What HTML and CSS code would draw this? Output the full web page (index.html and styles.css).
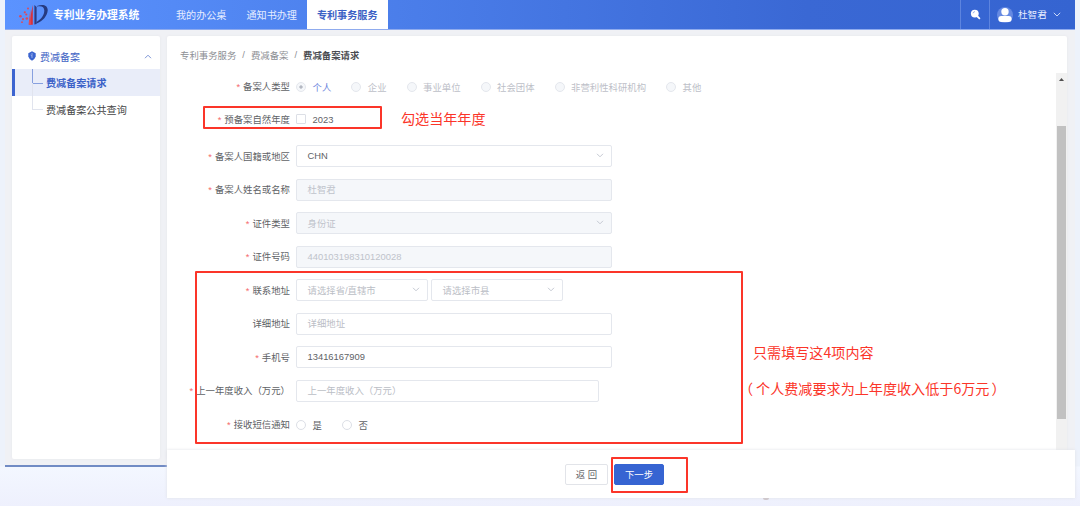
FILE: index.html
```html
<!DOCTYPE html>
<html lang="zh-CN">
<head>
  <meta charset="UTF-8">
  <meta name="viewport" content="width=device-width, initial-scale=1.0">
  <title>专利业务办理系统</title>
  <link rel="stylesheet" href="styles.css">
</head>
<body>
  <div class="app">
    <header class="header">
      <svg class="logo" width="30" height="22" viewBox="0 0 30 22">
        <path d="M18 2C24 -.6 29 1.500 28.700 6.500C28.200 12 24 17 17.500 19.500V18C22.500 15 25.300 11 25.300 6.500C25.300 2.500 22 1.500 18 2.600Z" fill="#263a80"/>
        <path d="M15.400 1L17.600 3V20L15.400 20.500Z" fill="#2b3c84"/>
        <path d="M13.800 1V20.800H10.300L12.300 8Z" fill="#d8323c"/>
        <path d="M11.300 5.500L11.500 14L12 20.800H9.500Z" fill="#e04a56"/>
        <g fill="#dc4a5c">
          <circle cx="9" cy="4.500" r="1"/><circle cx="5.800" cy="8.300" r="1.100"/>
          <circle cx="1.400" cy="12.200" r="1.300"/><circle cx="7.300" cy="10.500" r="1.100"/><circle cx="4" cy="15.200" r="1.100"/><circle cx="7.800" cy="14.500" r="1.300"/><circle cx="3" cy="18.200" r=".9"/>
        </g>
      </svg>
      <span class="title">专利业务办理系统</span>
      <nav class="nav">
        <a>我的办公桌</a>
        <a>通知书办理</a>
        <a class="active">专利事务服务</a>
      </nav>
      <div class="search">
        <svg width="11" height="11" viewBox="0 0 11 11"><circle cx="4.800" cy="4.600" r="3.900" fill="#fff"/><path d="M7.500 7.500L9.400 9.400" stroke="#fff" stroke-width="1.800" stroke-linecap="round"/><path d="M3 4.300A2 2 0 0 1 5 2.600" fill="none" stroke="#8aa4e2" stroke-width=".8"/></svg>
      </div>
      <div class="user">
        <svg width="16" height="16" viewBox="0 0 16 16"><circle cx="8" cy="8" r="8" fill="#668ae2"/><circle cx="8" cy="4.700" r="3.700" fill="#fff"/><rect x="1.300" y="9" width="13.400" height="6" rx="3" fill="#fff"/></svg>
        <span>杜智君</span>
        <svg width="8" height="5" viewBox="0 0 8 5"><path d="M.8 .8L4 4L7.200 .8" fill="none" stroke="#c9d7f6"/></svg>
      </div>
    </header>

    <div class="body">
      <aside class="sidebar">
        <div class="menu-title">
          <svg width="8" height="10" viewBox="0 0 8 10"><path d="M4 .3L7.700 2.200V5.500Q7 8 4 9.700Q1 8 .3 5.500V2.200Z" fill="#3b64cf"/><path d="M4 2V7M2.600 4L4 5.200" stroke="#a9bdf0" stroke-width=".8" fill="none"/></svg>
          <span>费减备案</span>
          <svg class="fold" width="8" height="5" viewBox="0 0 8 5"><path d="M1 4.200L4 1.200L7 4.200" fill="none" stroke="#7d95d6"/></svg>
        </div>
        <div class="menu-item current"><i class="branch"></i>费减备案请求</div>
        <div class="menu-item"><i class="branch"></i>费减备案公共查询</div>
      </aside>

      <main class="main">
        <div class="crumb"><span>专利事务服务</span><i>/</i><span>费减备案</span><i>/</i><b>费减备案请求</b></div>
        <div class="scroll">
          <form class="form">
            <div class="row type-row">
              <label class="required">备案人类型</label>
              <div class="types">
                <span class="radio off checked">个人</span>
                <span class="radio off">企业</span>
                <span class="radio off">事业单位</span>
                <span class="radio off">社会团体</span>
                <span class="radio off">非营利性科研机构</span>
                <span class="radio off">其他</span>
              </div>
            </div>
            <div class="row year-row">
              <label class="required">预备案自然年度</label>
              <span class="checkbox">2023</span>
            </div>
            <div class="row">
              <label class="required">备案人国籍或地区</label>
              <div class="field select">CHN<svg class="arrow" width="8" height="5" viewBox="0 0 8 5"><path d="M1 .8L4 3.800L7 .8"/></svg></div>
            </div>
            <div class="row">
              <label class="required">备案人姓名或名称</label>
              <div class="field disabled">杜智君</div>
            </div>
            <div class="row">
              <label class="required">证件类型</label>
              <div class="field select disabled">身份证<svg class="arrow" width="8" height="5" viewBox="0 0 8 5"><path d="M1 .8L4 3.800L7 .8"/></svg></div>
            </div>
            <div class="row">
              <label class="required">证件号码</label>
              <div class="field disabled">440103198310120028</div>
            </div>
            <div class="row">
              <label class="required">联系地址</label>
              <div class="field select half empty">请选择省/直辖市<svg class="arrow" width="8" height="5" viewBox="0 0 8 5"><path d="M1 .8L4 3.800L7 .8"/></svg></div>
              <div class="field select half empty">请选择市县<svg class="arrow" width="8" height="5" viewBox="0 0 8 5"><path d="M1 .8L4 3.800L7 .8"/></svg></div>
            </div>
            <div class="row">
              <label>详细地址</label>
              <div class="field empty">详细地址</div>
            </div>
            <div class="row">
              <label class="required">手机号</label>
              <div class="field">13416167909</div>
            </div>
            <div class="row">
              <label class="required">上一年度收入（万元）</label>
              <div class="field income empty">上一年度收入（万元）</div>
            </div>
            <div class="row">
              <label class="required">接收短信通知</label>
              <div class="sms">
                <span class="radio">是</span>
                <span class="radio">否</span>
              </div>
            </div>
          </form>
          <div class="scrollbar">
            <svg width="5" height="3" viewBox="0 0 5 3"><path d="M2.500 0L5 3H0Z" fill="#505050"/></svg>
            <div class="thumb"></div>
          </div>
        </div>
      </main>
    </div>
  </div>

  <footer class="actions">
    <button class="btn">返 回</button>
    <button class="btn primary">下一步</button>
  </footer>
  <div class="speck"></div>

  <!-- 操作说明标注 -->
  <div class="mark mark-year"></div>
  <div class="mark mark-fields"></div>
  <div class="mark mark-next"></div>
  <p class="note note-year">勾选当年年度</p>
  <p class="note note-fields">只需填写这4项内容</p>
  <p class="note note-income"><span class="open">（</span>个人费减要求为上年度收入低于6万元<span class="close">）</span></p>
</body>
</html>
```
FILE: styles.css
```css
*,
*::before {
  box-sizing: border-box;
}
body {
  margin: 0;
  height: 506px;
  overflow: hidden;
  position: relative;
  font-family: "Liberation Sans", "Noto Sans CJK SC", sans-serif;
  font-size: 9.4px;
  color: #606266;
  background: linear-gradient(#edf2fb 0, #edf2fb 466px, #f3f7ff 467px, #eef0fd 506px);
}
.app {
  margin: 0 5px;
  height: 467px;
  display: flex;
  flex-direction: column;
  background: #f0f1f5;
  border-bottom: 2px solid #718bc4;
}

/* header */
.header {
  height: 30px;
  flex: none;
  display: flex;
  align-items: center;
  color: #e6edff;
  background: linear-gradient(90deg, #5b93ff, #3a68d4 75%, #3564d1);
  border-bottom: 1px solid #8fabee;
}
.logo {
  margin: 1px 0 0 14px;
}
.title {
  width: 87px;
  margin: 0 0 2px 4px;
  font-size: 10.8px;
  font-weight: bold;
  color: #fff;
  white-space: nowrap;
}
.nav {
  display: flex;
  align-self: stretch;
  margin-left: 26px;
}
.nav a {
  display: flex;
  align-items: center;
  padding: 0 10px;
  font-size: 10.1px;
}
.nav .active {
  background: #fff;
  color: #3b61c5;
  font-weight: bold;
}
.search {
  width: 30px;
  height: 29px;
  margin-left: auto;
  display: flex;
  align-items: center;
  justify-content: center;
  border: solid #5d84df;
  border-width: 0 1px;
}
.user {
  width: 85px;
  display: flex;
  align-items: center;
  padding-left: 7px;
  font-size: 9.6px;
}
.user span {
  margin: 0 6px 1px 5px;
}

/* columns */
.body {
  flex: 1;
  display: flex;
  align-items: flex-start;
  padding: 6px 8px 0 7px;
}
.sidebar {
  width: 148px;
  height: 423px;
  margin-right: 7px;
  background: #fff;
  border-radius: 2px;
  box-shadow: 0 0 3px #e6e7eb;
}
.menu-title {
  height: 33px;
  padding: 7px 8px 0 16px;
  display: flex;
  align-items: center;
  font-size: 10px;
  color: #3e62c4;
}
.menu-title span {
  margin-left: 4px;
}
.fold {
  margin-left: auto;
}
.menu-item {
  height: 27px;
  display: flex;
  align-items: center;
  padding-left: 20px;
  font-size: 10.1px;
  color: #454545;
}
.menu-item.current {
  padding-left: 17px;
  border-left: 3px solid #3c64d0;
  background: #e9edf9;
  color: #3b61c8;
  font-weight: bold;
}
.branch {
  width: 11px;
  height: 27px;
  margin: -27px 3px 0 0;
  border: solid #e1e4ee;
  border-width: 0 0 1px 1px;
}
.current .branch {
  height: 15px;
  margin-top: -12px;
  border-color: #87a0df;
}
.main {
  flex: 1;
  height: 423px;
  background: #fff;
  border-radius: 2px;
  box-shadow: 0 0 3px #e6e7eb;
}
.crumb {
  height: 37px;
  display: flex;
  align-items: center;
  padding-left: 13px;
  color: #8c8e93;
}
.crumb i {
  margin: 0 6px;
  font-style: normal;
}
.crumb b {
  color: #494b50;
}
.scroll {
  height: 377px;
  display: flex;
}

/* form */
.form {
  flex: 1;
  padding-top: 3px;
}
.row {
  height: 22px;
  margin-bottom: 11.5px;
  display: flex;
  align-items: center;
}
.type-row {
  margin-bottom: 10px;
}
.year-row {
  margin-bottom: 15px;
}
.row label {
  width: 123px;
  margin-right: 6px;
  padding-bottom: 1px;
  text-align: right;
  white-space: nowrap;
}
.type-row label {
  padding-bottom: 2px;
}
.required::before {
  content: "*";
  margin-right: 3px;
  color: #f56c6c;
}
.types,
.sms {
  display: flex;
  gap: 20px;
}
.radio,
.checkbox {
  display: flex;
  align-items: center;
}
.sms .radio {
  padding-top: 1px;
}
.radio::before,
.checkbox::before {
  content: "";
  width: 10px;
  height: 10px;
  margin-right: 6.5px;
  border: 1px solid #dcdfe6;
  border-radius: 50%;
  background: #fff;
}
.checkbox::before {
  border-radius: 1px;
}
.radio.off {
  color: #bdc0c8;
}
.radio.off::before {
  border-color: #e4e7ed;
  background: #f5f7fa;
}
.radio.off.checked {
  color: #6a82dc;
}
.radio.checked::before {
  background: radial-gradient(circle, #b4b8c2 1.3px, #f5f7fa 2px);
}
.field {
  width: 316px;
  height: 22px;
  display: flex;
  align-items: center;
  padding: 0 7px 1px 10.5px;
  border: 1px solid #e4e7ed;
  border-radius: 2px;
  background: #fff;
}
.field.half {
  width: 131.5px;
  margin-right: 3.5px;
}
.field.income {
  width: 303px;
}
.field.disabled {
  background: #f5f7fa;
  color: #bfc3cb;
}
.field.empty {
  color: #bbbec6;
}
.arrow {
  margin-left: auto;
  fill: none;
  stroke: #c5c9d2;
}
.scrollbar {
  width: 11px;
  display: flex;
  flex-direction: column;
  align-items: center;
  padding-top: 5px;
  background: #f1f1f1;
}
.thumb {
  width: 9px;
  height: 293px;
  margin-top: 45px;
  background: #c1c1c1;
}

/* the action bar stays above the page bottom */
.actions {
  position: absolute;
  left: 167px;
  right: 5px;
  bottom: 8px;
  height: 48px;
  display: flex;
  padding: 14px 0 0 398px;
  gap: 6px;
  background: #fff;
  box-shadow: 0 0 3px #dfe1e6;
}
.btn {
  width: 43px;
  height: 21px;
  padding: 0 0 1px;
  border: 1px solid #e2e4e9;
  border-radius: 2px;
  background: #fff;
  color: #606266;
  font: inherit;
}
.btn.primary {
  width: 50px;
  border-color: #3664d2;
  background: #3664d2;
  color: #fff;
}
.speck {
  position: absolute;
  left: 763px;
  top: 498px;
  width: 6px;
  height: 2px;
  border-radius: 0 0 3px 3px;
  background: #cfc8cc;
}

/* annotations */
.mark {
  position: absolute;
  border: 2px solid #fb3529;
  border-radius: 1px;
}
.mark-year {
  left: 203px;
  top: 106px;
  width: 179px;
  height: 23px;
}
.mark-fields {
  left: 195px;
  top: 271px;
  width: 548px;
  height: 173px;
}
.mark-next {
  left: 611px;
  top: 457px;
  width: 77px;
  height: 36px;
}
.note {
  position: absolute;
  margin: 0;
  font-family: "Noto Sans CJK SC", sans-serif;
  font-size: 14.1px;
  line-height: 20px;
  color: #fb3529;
  white-space: nowrap;
}
.note-year {
  left: 401px;
  top: 108px;
}
.note-fields {
  left: 753px;
  top: 342px;
}
.note-income {
  left: 739px;
  top: 378px;
}
.note .open {
  margin-right: 3px;
}
.note .close {
  margin-left: 2px;
}
```
